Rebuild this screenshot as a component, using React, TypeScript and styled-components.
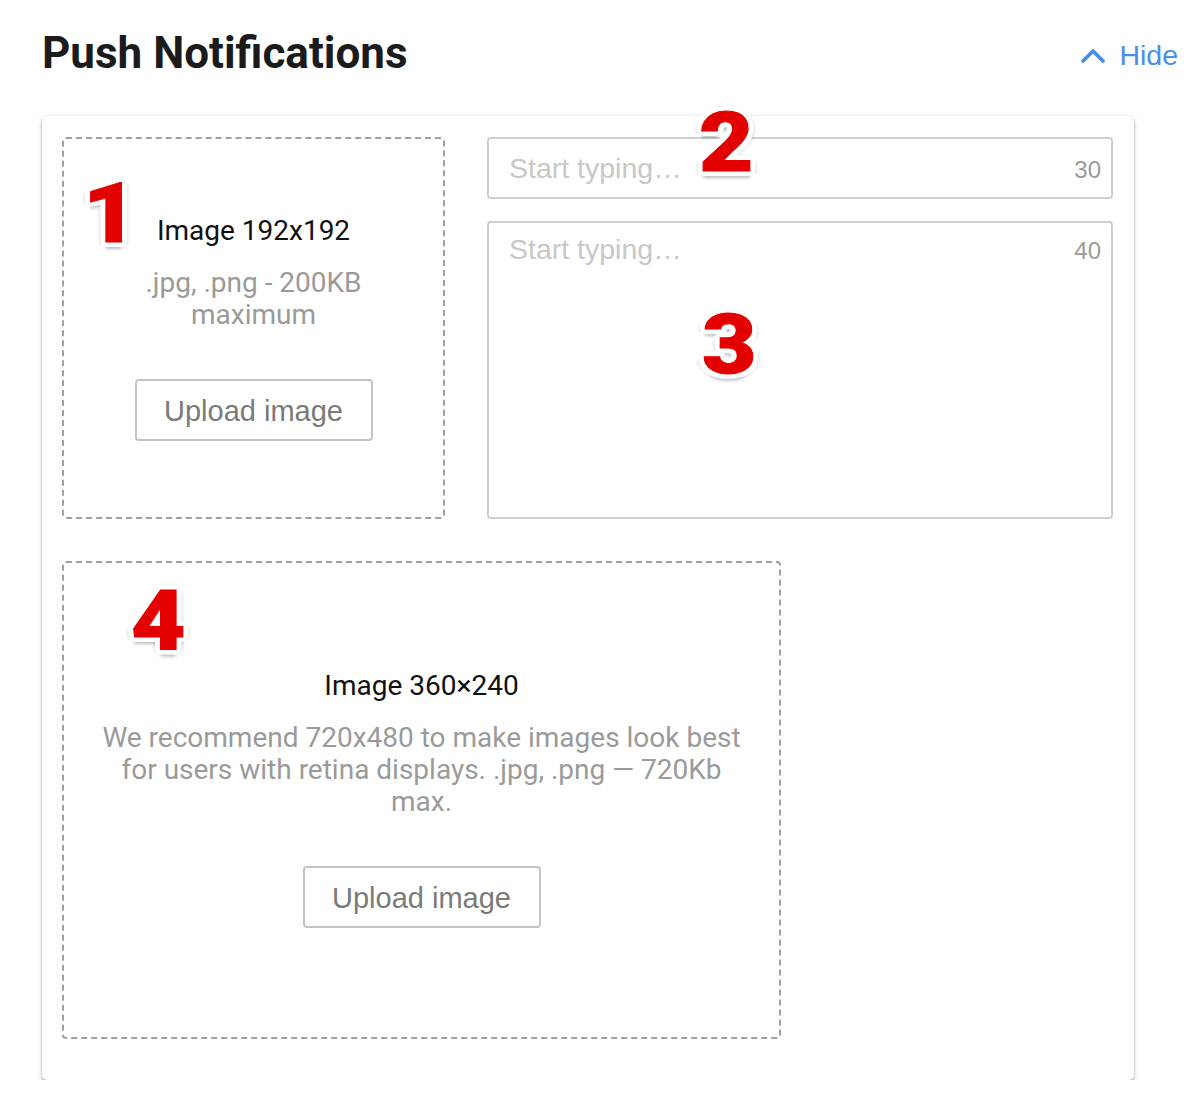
import React from "react";
import styled, { createGlobalStyle } from "styled-components";

const Global = createGlobalStyle`
  html, body { margin: 0; padding: 0; background: #ffffff; }
  body { font-family: Roboto, "Helvetica Neue", Arial, sans-serif; }
  * { box-sizing: border-box; }
`;

const Page = styled.div`
  width: 1188px;
  padding: 0 10px 0 42px;
`;

const Header = styled.header`
  display: flex;
  align-items: center;
  justify-content: space-between;
  height: 116px;
  padding-bottom: 10px;
`;

const Title = styled.h1`
  margin: 0;
  font-family: Roboto, sans-serif;
  font-weight: 700;
  font-size: 44px;
  color: #1b1b1b;
`;

const HideLink = styled.a`
  display: flex;
  align-items: center;
  gap: 13px;
  padding-top: 4px;
  color: #4a8fe7;
  font-family: "Liberation Sans", Arial, sans-serif;
  font-size: 28.5px;
  text-decoration: none;
  cursor: pointer;
`;

const Card = styled.section`
  width: 1092px;
  background: #fff;
  border-radius: 5px;
  box-shadow: 0 0 0 1px rgba(0, 0, 0, 0.04), 0 2px 3px rgba(0, 0, 0, 0.25), 0 3px 9px rgba(0, 0, 0, 0.1);
  padding: 21px 21px 41px 20px;
  display: grid;
  grid-template-columns: 383px 626px;
  column-gap: 42px;
  row-gap: 42px;
`;

const DropZone = styled.div<{ $wide?: boolean }>`
  position: relative;
  border: 2px dashed #a0a0a0;
  border-radius: 4px;
  display: flex;
  flex-direction: column;
  align-items: center;
  text-align: center;
  width: ${(p) => (p.$wide ? "719px" : "383px")};
  height: ${(p) => (p.$wide ? "478px" : "382px")};
  padding: ${(p) => (p.$wide ? "107px 30px 0" : "76px 30px 0")};
  grid-column: ${(p) => (p.$wide ? "1 / span 2" : "auto")};
`;

const ImageLabel = styled.div`
  font-family: Roboto, sans-serif;
  font-size: 28px;
  line-height: 32px;
  color: #111;
`;

const Hint = styled.p<{ $wide?: boolean }>`
  margin: 20px 0 48px;
  font-family: Roboto, sans-serif;
  font-size: 28px;
  line-height: 32px;
  color: #9a9a9a;
  max-width: ${(p) => (p.$wide ? "650px" : "240px")};
`;

const UploadButton = styled.button`
  width: 238px;
  height: 62px;
  background: #fff;
  border: 2px solid #c4c4c4;
  border-radius: 4px;
  font-family: "Liberation Sans", Arial, sans-serif;
  font-size: 29px;
  color: #7a7a7a;
  padding-top: 3px;
  cursor: pointer;
`;

const Fields = styled.div`
  display: flex;
  flex-direction: column;
  gap: 22px;
`;

const Field = styled.div<{ $tall?: boolean }>`
  position: relative;
  height: ${(p) => (p.$tall ? "298px" : "62px")};
  border: 2px solid #cfcfcf;
  border-radius: 4px;
  display: flex;
  align-items: flex-start;
  justify-content: space-between;
  padding: ${(p) => (p.$tall ? "10px 10px 0 20px" : "13px 10px 0 20px")};
`;

const Placeholder = styled.span`
  font-family: "Liberation Sans", Arial, sans-serif;
  font-size: 28.5px;
  line-height: 32px;
  color: #c8c8c8;
`;

const Counter = styled.span`
  font-family: "Liberation Sans", Arial, sans-serif;
  font-size: 24px;
  line-height: 32px;
  color: #9a9a9a;
  padding-top: 2px;
`;

const Badge = styled.span<{ $x: number; $y: number }>`
  position: absolute;
  left: ${(p) => p.$x}px;
  top: ${(p) => p.$y}px;
  display: inline-block;
  transform: scaleX(1.12);
  transform-origin: left top;
  font-family: Roboto, "DejaVu Sans", sans-serif;
  font-weight: 900;
  font-size: 84px;
  line-height: 1;
  color: #e20000;
  -webkit-text-stroke: 1px #e20000;
  pointer-events: none;
  text-shadow:
    3px 0 0 #fff, -3px 0 0 #fff, 0 3px 0 #fff, 0 -3px 0 #fff,
    2px 2px 0 #fff, -2px 2px 0 #fff, 2px -2px 0 #fff, -2px -2px 0 #fff,
    5px 0 0 #fff, -5px 0 0 #fff, 0 5px 0 #fff, 0 -5px 0 #fff,
    4px 4px 0 #fff, -4px 4px 0 #fff, 4px -4px 0 #fff, -4px -4px 0 #fff,
    0 7px 3px rgba(0, 0, 0, 0.25), 0 -5px 3px rgba(0, 0, 0, 0.08),
    6px 2px 3px rgba(0, 0, 0, 0.12), -6px 2px 3px rgba(0, 0, 0, 0.12);
`;

const ChevronUp = () => (
  <svg width="26" height="18" viewBox="0 0 26 18" fill="none">
    <path d="M3 15 L13 5 L23 15" stroke="#4a8fe7" strokeWidth="3.8" strokeLinecap="round" strokeLinejoin="round" />
  </svg>
);

export default function App() {
  return (
    <>
      <Global />
      <Page>
        <Header>
          <Title>Push Notifications</Title>
          <HideLink>
            <ChevronUp />
            Hide
          </HideLink>
        </Header>
        <Card>
          <DropZone>
            <Badge $x={19} $y={33}>1</Badge>
            <ImageLabel>Image 192x192</ImageLabel>
            <Hint>.jpg, .png - 200KB maximum</Hint>
            <UploadButton>Upload image</UploadButton>
          </DropZone>
          <Fields>
            <Field>
              <Placeholder>Start typing…</Placeholder>
              <Counter>30</Counter>
              <Badge $x={210} $y={-38}>2</Badge>
            </Field>
            <Field $tall>
              <Placeholder>Start typing…</Placeholder>
              <Counter>40</Counter>
              <Badge $x={213} $y={80}>3</Badge>
            </Field>
          </Fields>
          <DropZone $wide>
            <Badge $x={67} $y={17}>4</Badge>
            <ImageLabel>Image 360×240</ImageLabel>
            <Hint $wide>
              We recommend 720x480 to make images look best for users with retina displays. .jpg, .png — 720Kb max.
            </Hint>
            <UploadButton>Upload image</UploadButton>
          </DropZone>
        </Card>
      </Page>
    </>
  );
}
